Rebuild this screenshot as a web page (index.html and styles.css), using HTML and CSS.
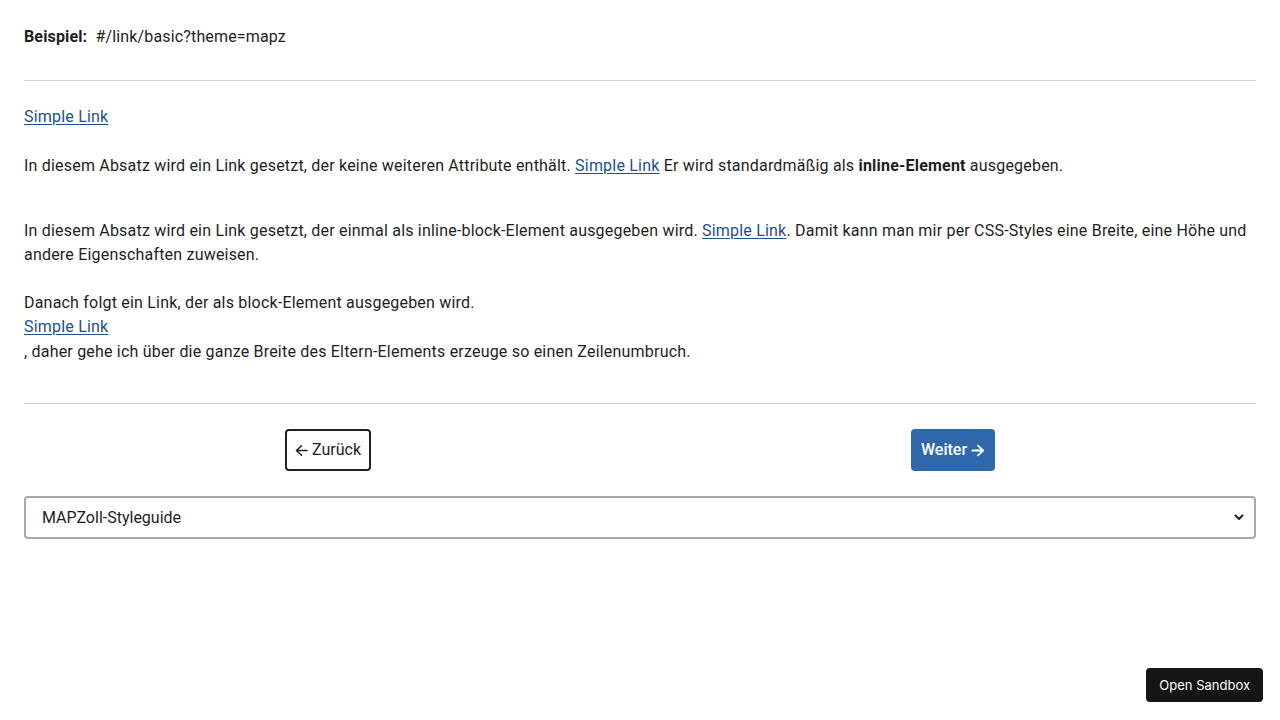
FILE: index.html
```html
<!DOCTYPE html>
<html lang="de">
<head>
<meta charset="utf-8">
<title>Link basic</title>
<link rel="stylesheet" href="styles.css">
</head>
<body>
<main class="page">
  <p class="example"><strong>Beispiel:</strong>&nbsp; #/link/basic?theme=mapz</p>
  <hr class="rule">
  <section class="demo">
    <p class="first"><a href="#">Simple Link</a></p>
    <p class="para">In diesem Absatz wird ein Link gesetzt, der keine weiteren Attribute enthält. <a href="#">Simple Link</a> Er wird standardmäßig als <strong>inline-Element</strong> ausgegeben.</p>
    <p class="para gap">In diesem Absatz wird ein Link gesetzt, der einmal als inline-block-Element ausgegeben wird. <a href="#" class="ib">Simple Link</a>. Damit kann man mir per CSS-Styles eine Breite, eine Höhe und andere Eigenschaften zuweisen.</p>
    <p class="para">Danach folgt ein Link, der als block-Element ausgegeben wird. <a href="#" class="blk">Simple Link</a>, daher gehe ich über die ganze Breite des Eltern-Elements erzeuge so einen Zeilenumbruch.</p>
  </section>
  <hr class="rule rule-bottom">
  <nav class="pager">
    <div class="cell"><a href="#" class="btn btn-outline"><svg width="14" height="13" viewBox="0 0 14 14" aria-hidden="true"><path d="M13 7H1.5M7 1.8 1.5 7 7 12.2" fill="none" stroke="currentColor" stroke-width="1.6" stroke-linecap="round" stroke-linejoin="round"/></svg>Zurück</a></div>
    <div class="cell"><a href="#" class="btn btn-primary">Weiter<svg width="14" height="13" viewBox="0 0 14 14" aria-hidden="true"><path d="M1 7h11.5M7 1.8 12.5 7 7 12.2" fill="none" stroke="currentColor" stroke-width="2" stroke-linecap="round" stroke-linejoin="round"/></svg></a></div>
  </nav>
  <div class="select-wrap">
    <select class="select">
      <option>MAPZoll-Styleguide</option>
    </select>
    <svg class="chev" width="10" height="7" viewBox="0 0 10 7" aria-hidden="true"><path d="M1.5 1.5 5 5l3.5-3.5" fill="none" stroke="#222" stroke-width="2" stroke-linecap="round" stroke-linejoin="round"/></svg>
  </div>
</main>
<button class="sandbox">Open Sandbox</button>
</body>
</html>
```
FILE: styles.css
```css
* { box-sizing: border-box; }
html, body { margin: 0; padding: 0; background: #fff; }
body {
  font-family: Roboto, "Liberation Sans", Arial, sans-serif;
  font-size: 16px;
  line-height: 24px;
  color: #1e1e1e;
}
.page { padding: 25px 24px 0; }
p { margin: 0; }
strong { font-weight: 700; }
a { color: #1c4f91; text-decoration: underline; text-underline-offset: 2px; }
.example { margin-bottom: 31px; letter-spacing: 0.15px; }
.rule { border: 0; border-top: 1px solid #cfcfcf; margin: 0; }
.demo { padding-top: 24px; letter-spacing: 0.2px; }
.first { margin-bottom: 25px; }
.para { line-height: 24.5px; }
.para.gap { margin-top: 40px; margin-bottom: 23px; }
.blk { display: block; }
.rule-bottom { margin-top: 39px; }
.pager {
  display: grid;
  grid-template-columns: 1fr 1fr;
  padding: 25px 0 25px;
}
.cell { display: flex; justify-content: center; }
.btn {
  display: inline-flex;
  align-items: center;
  gap: 4px;
  height: 42px;
  border-radius: 4px;
  text-decoration: none;
  font-size: 16px;
}
.btn-outline {
  border: 2px solid #222;
  color: #222;
  padding: 0 8px;
  margin-left: -8px;
  width: 86px;
}
.btn-primary {
  background: #2f68ab;
  color: #fff;
  font-weight: 500;
  padding: 0 10px;
  width: 84px;
  margin-left: 10px;
}
.select-wrap { position: relative; }
.select {
  appearance: none;
  -webkit-appearance: none;
  display: block;
  width: 100%;
  height: 43px;
  border: 2px solid #a9a9a9;
  border-radius: 4px;
  background: #fff;
  padding: 0 16px;
  font-family: Roboto, "Liberation Sans", Arial, sans-serif;
  font-size: 16px;
  color: #1e1e1e;
}
.chev { position: absolute; right: 12px; top: 18px; pointer-events: none; }
.sandbox {
  position: fixed;
  right: 17px;
  bottom: 18px;
  height: 34px;
  padding: 0 13px;
  background: #151515;
  color: #fff;
  border: 0;
  border-radius: 4px;
  font-family: Inter, Roboto, "Liberation Sans", sans-serif;
  font-size: 13px;
}
```
